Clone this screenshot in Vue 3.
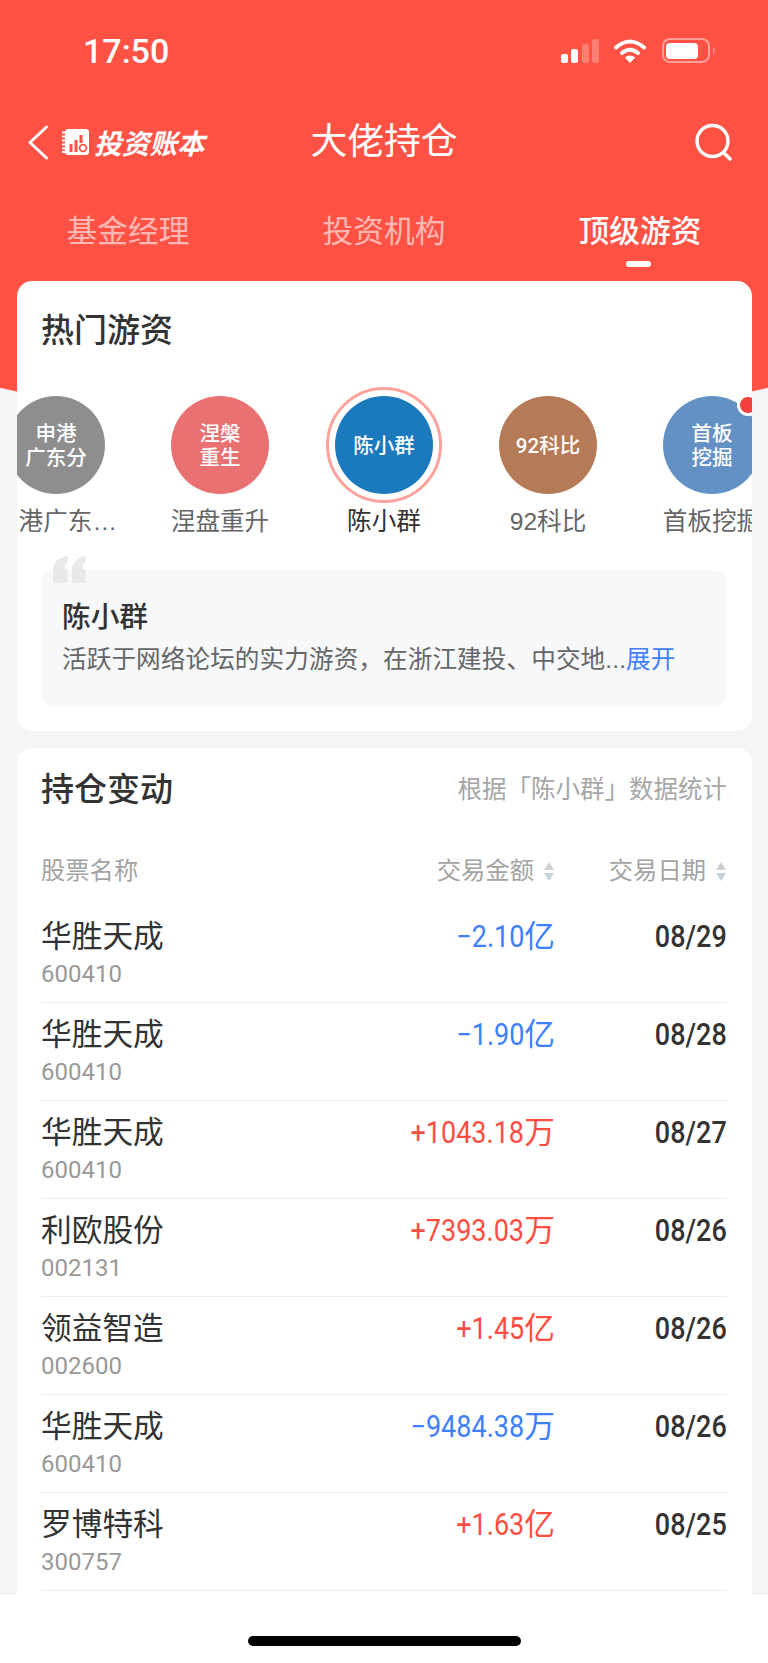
<template>
  <div class="page">
    <div class="screen">
      <div class="red-bg"></div>

      <div class="status">
        <span class="time">17:50</span>
        <div class="status-icons">
          <svg class="signal" width="38" height="24" viewBox="0 0 38 24">
            <rect x="0" y="15" width="7" height="9" rx="2" fill="#fff" />
            <rect x="10" y="10" width="7" height="14" rx="2" fill="#fff" />
            <rect x="21" y="5" width="7" height="19" rx="2" fill="#fff" opacity="0.25" />
            <rect x="31" y="0" width="7" height="24" rx="2" fill="#fff" opacity="0.25" />
          </svg>
          <svg class="wifi" width="32" height="24" viewBox="0 0 32 24">
            <path d="M2 8.5 Q16 -3.5 30 8.5" fill="none" stroke="#fff" stroke-width="4" stroke-linecap="round" />
            <path d="M8 14 Q16 7.5 24 14" fill="none" stroke="#fff" stroke-width="4" stroke-linecap="round" />
            <path d="M16 24 L10.8 18.6 Q16 14.6 21.2 18.6 Z" fill="#fff" />
          </svg>
          <svg class="battery" width="54" height="25" viewBox="0 0 54 25">
            <rect x="1" y="1" width="46" height="23" rx="7" fill="none" stroke="#fff" stroke-opacity="0.45" stroke-width="2" />
            <rect x="4" y="5" width="32" height="16" rx="4" fill="#fff" />
            <path d="M51 9 C53 10 53 15 51 16 Z" fill="#fff" fill-opacity="0.45" />
          </svg>
        </div>
      </div>

      <div class="nav">
        <div class="nav-left">
          <svg width="22" height="35" viewBox="0 0 22 35">
            <path d="M19.5 2 L3 17.5 L19.5 33" fill="none" stroke="#fff" stroke-width="3" stroke-linecap="round" stroke-linejoin="round" />
          </svg>
          <svg class="logo-icon" width="27" height="26" viewBox="0 0 27 26">
            <rect x="3" y="0" width="24" height="26" rx="3" fill="#fff" />
            <path d="M0 3.5 H5 M0 7.5 H5 M0 11.5 H5 M0 15.5 H5 M0 19.5 H5 M0 23 H5" stroke="#fff" stroke-width="2" stroke-linecap="round" />
            <path d="M9 15 V23 M14 11 V23 M19 6 V14" stroke="#ff5245" stroke-width="3" />
            <circle cx="21" cy="19" r="3.4" fill="none" stroke="#ff5245" stroke-width="1.8" />
          </svg>
          <span class="logo-text">投资账本</span>
        </div>
        <span class="nav-title">大佬持仓</span>
        <svg class="search" width="40" height="38" viewBox="0 0 40 38">
          <circle cx="18.5" cy="18" r="15.5" fill="none" stroke="#fff" stroke-width="3.4" />
          <path d="M30 30 L36 36" stroke="#fff" stroke-width="3.6" stroke-linecap="round" />
        </svg>
      </div>

      <div class="tabs">
        <div v-for="(t, i) in tabs" :key="t" class="tab" :class="{ active: i === 2 }">
          <span>{{ t }}</span>
          <i class="tab-line"></i>
        </div>
      </div>

      <section class="card hot">
        <p class="card-title">热门游资</p>
        <div class="scroller">
          <div class="scroller-inner">
            <div v-for="a in people" :key="a.name" class="person" :class="{ selected: a.selected }">
              <div class="ring">
                <div class="avatar" :style="{ background: a.color }">{{ a.short }}</div>
                <i v-if="a.dot" class="dot"></i>
              </div>
              <p class="person-name">{{ a.name }}</p>
            </div>
          </div>
        </div>
        <div class="intro">
          <svg class="quote" width="35" height="27" viewBox="0 0 35 27">
            <path d="M1 27 V14 C1 7 6 1 16 0 L15 7 C13 8 12.5 10 12.5 13 H15.5 V27 Z" fill="#e9e9e9" />
            <path d="M20 27 V14 C20 7 25 1 34 0 L33 7 C31 8 30.5 10 30.5 13 H33.5 V27 Z" fill="#e9e9e9" />
          </svg>
          <p class="intro-name">陈小群</p>
          <p class="intro-desc">活跃于网络论坛的实力游资，在浙江建投、中交地...<span class="more">展开</span></p>
        </div>
      </section>

      <section class="card holdings">
        <div class="holdings-top">
          <p class="card-title">持仓变动</p>
          <span class="source">根据「陈小群」数据统计</span>
        </div>
        <div class="table-head">
          <span class="col-name">股票名称</span>
          <span class="col-amount">交易金额<i class="sort"></i></span>
          <span class="col-date">交易日期<i class="sort"></i></span>
        </div>
        <div v-for="r in rows" :key="r.date + r.code" class="row">
          <div class="col-name">
            <p class="stock">{{ r.stock }}</p>
            <p class="code">{{ r.code }}</p>
          </div>
          <span class="col-amount amount" :class="r.up ? 'up' : 'down'"><b class="num">{{ r.amount }}</b>{{ r.unit }}</span>
          <span class="col-date date"><b class="num">{{ r.date }}</b></span>
        </div>
      </section>
    </div>

    <div class="home-bar">
      <i class="home-line"></i>
    </div>
  </div>
</template>

<script setup>
const tabs = ['基金经理', '投资机构', '顶级游资']

const people = [
  { short: '申港\n广东分', name: '申港广东分公司', color: '#8e8e8e' },
  { short: '涅槃\n重生', name: '涅盘重升', color: '#e97172' },
  { short: '陈小群', name: '陈小群', color: '#1a7abd', selected: true },
  { short: '92科比', name: '92科比', color: '#b57a56' },
  { short: '首板\n挖掘', name: '首板挖掘', color: '#6391c4', dot: true }
]

const rows = [
  { stock: '华胜天成', code: '600410', amount: '−2.10', unit: '亿', date: '08/29', up: false },
  { stock: '华胜天成', code: '600410', amount: '−1.90', unit: '亿', date: '08/28', up: false },
  { stock: '华胜天成', code: '600410', amount: '+1043.18', unit: '万', date: '08/27', up: true },
  { stock: '利欧股份', code: '002131', amount: '+7393.03', unit: '万', date: '08/26', up: true },
  { stock: '领益智造', code: '002600', amount: '+1.45', unit: '亿', date: '08/26', up: true },
  { stock: '华胜天成', code: '600410', amount: '−9484.38', unit: '万', date: '08/26', up: false },
  { stock: '罗博特科', code: '300757', amount: '+1.63', unit: '亿', date: '08/25', up: true }
]
</script>

<style scoped>
p {
  margin: 0;
}

i {
  display: block;
  font-style: normal;
}

.page {
  width: 768px;
  height: 1663px;
  display: flex;
  flex-direction: column;
  overflow: hidden;
  background: #fff;
  font-family: Roboto, "Noto Sans CJK SC", sans-serif;
  color: #333;
}

.screen {
  position: relative;
  height: 1595px;
  overflow: hidden;
  background: #f4f5f7;
}

.red-bg {
  position: absolute;
  top: 0;
  left: -116px;
  width: 1000px;
  height: 423px;
  background: #ff5245;
  border-radius: 0 0 500px 500px / 0 0 98px 98px;
}

.status {
  position: relative;
  height: 102px;
  display: flex;
  justify-content: space-between;
  padding: 38px 52px 0 83px;
  box-sizing: border-box;
}

.time {
  font-size: 34px;
  line-height: 26px;
  font-weight: 500;
  color: #fff;
}

.status-icons {
  display: flex;
  align-items: flex-start;
}

.signal {
  margin: 1px 15px 0 0;
}

.wifi {
  margin: 1px 16px 0 0;
}

.nav {
  position: relative;
  height: 80px;
  display: flex;
  align-items: center;
  justify-content: space-between;
  padding: 0 34px 0 27px;
}

.nav-left {
  display: flex;
  align-items: center;
}

.logo-icon {
  margin-left: 13px;
}

.logo-text {
  margin-left: 5px;
  font-size: 27.7px;
  font-weight: 700;
  font-style: italic;
  color: #fff;
}

.nav-title {
  position: absolute;
  left: 0;
  right: 0;
  text-align: center;
  font-size: 36.8px;
  line-height: 44px;
  color: #fff;
  pointer-events: none;
}

.tabs {
  position: relative;
  display: flex;
  height: 99px;
  padding-top: 29px;
  box-sizing: border-box;
}

.tab {
  flex: 1;
  display: flex;
  flex-direction: column;
  align-items: center;
  font-size: 30.7px;
  line-height: 42px;
  color: rgba(255, 255, 255, 0.6);
}

.tab.active {
  color: #fff;
  font-weight: 500;
}

.tab-line {
  width: 25px;
  height: 6px;
  margin: 8px 3px 0 0;
  border-radius: 3px;
}

.tab.active .tab-line {
  background: #fff;
}

.card {
  position: relative;
  margin: 0 16px 0 17px;
  background: #fff;
  border-radius: 15px;
}

.hot {
  height: 450px;
  padding-top: 30px;
  box-sizing: border-box;
  overflow: hidden;
}

.card-title {
  padding-left: 24px;
  font-size: 33px;
  line-height: 40px;
  font-weight: 500;
  color: #333;
}

.scroller {
  margin-top: 36px;
  overflow: hidden;
}

.scroller-inner {
  display: flex;
  width: 900px;
  margin-left: -43px;
}

.person {
  width: 164px;
  display: flex;
  flex-direction: column;
  align-items: center;
}

.ring {
  position: relative;
  width: 116px;
  height: 116px;
  display: flex;
  align-items: center;
  justify-content: center;
  border-radius: 50%;
  box-sizing: border-box;
}

.selected .ring {
  border: 3px solid #ffa29b;
}

.avatar {
  width: 98px;
  height: 98px;
  flex: none;
  display: flex;
  align-items: center;
  justify-content: center;
  padding-top: 1px;
  box-sizing: border-box;
  border-radius: 50%;
  white-space: pre-line;
  text-align: center;
  font-size: 20.5px;
  line-height: 24px;
  font-weight: 500;
  color: #fff;
}

.dot {
  position: absolute;
  top: 7px;
  left: 83px;
  width: 16px;
  height: 16px;
  background: #f2413c;
  border: 3.5px solid #fff;
  border-radius: 50%;
}

.person-name {
  width: 124px;
  margin-top: 2px;
  font-family: "Liberation Sans", "Noto Sans CJK SC", sans-serif;
  font-size: 24.6px;
  line-height: 34px;
  color: #666;
  text-align: center;
  white-space: nowrap;
  overflow: hidden;
  text-overflow: ellipsis;
}

.selected .person-name {
  color: #333;
}

.intro {
  position: relative;
  height: 136px;
  margin: 31px 25px 0 24px;
  padding: 26px 21px 0;
  box-sizing: border-box;
  background: #f7f8fa;
  border-radius: 14px;
}

.quote {
  position: absolute;
  left: 11px;
  top: -14px;
}

.intro-name {
  font-size: 28.7px;
  line-height: 42px;
  font-weight: 500;
  color: #333;
}

.intro-desc {
  margin-top: 5px;
  font-family: "Liberation Sans", "Noto Sans CJK SC", sans-serif;
  font-size: 24.6px;
  line-height: 34px;
  letter-spacing: 0.1px;
  color: #666;
  white-space: nowrap;
}

.more {
  color: #4080ff;
}

.holdings {
  min-height: 900px;
  margin-top: 17px;
  padding: 22px 25px 0 24px;
}

.holdings-top {
  display: flex;
  align-items: center;
  justify-content: space-between;
}

.holdings-top .card-title {
  padding-left: 0;
}

.source {
  font-size: 24.5px;
  line-height: 38px;
  color: #a6a6a6;
}

.table-head,
.row {
  display: flex;
}

.table-head {
  margin: 44px 0 17px;
  font-size: 24.3px;
  line-height: 34px;
  color: #a3a3a3;
}

.col-name {
  flex: 1;
}

.col-amount {
  width: 300px;
  display: flex;
  align-items: center;
  justify-content: flex-end;
}

.col-date {
  width: 172px;
  display: flex;
  align-items: center;
  justify-content: flex-end;
}

.sort {
  position: relative;
  width: 11px;
  height: 19px;
  margin-left: 10px;
}

.sort::before,
.sort::after {
  content: "";
  position: absolute;
  left: 0;
  border-left: 5.5px solid transparent;
  border-right: 5.5px solid transparent;
}

.sort::before {
  top: 0;
  border-bottom: 8px solid #cdd1d4;
}

.sort::after {
  bottom: 0;
  border-top: 8px solid #c4d2db;
}

.row {
  height: 98px;
  padding-top: 12px;
  box-sizing: border-box;
  border-bottom: 1px solid #eeeeee;
}

.stock {
  font-size: 30.7px;
  line-height: 40px;
  color: #333;
}

.code {
  font-size: 24px;
  line-height: 34px;
  color: #999;
}

.amount,
.date {
  height: 40px;
  align-items: baseline;
  font-size: 30.7px;
  line-height: 40px;
}

.num {
  display: inline-block;
  font-weight: 400;
  transform: scaleX(0.88);
  transform-origin: right center;
}

.date .num {
  font-weight: 500;
}

.up {
  color: #ff4d42;
}

.down {
  color: #4080ff;
}

.date {
  color: #333;
}

.home-bar {
  flex: 1;
  position: relative;
}

.home-line {
  position: absolute;
  left: 248px;
  top: 41px;
  width: 273px;
  height: 10px;
  border-radius: 5px;
  background: #000;
}
</style>
